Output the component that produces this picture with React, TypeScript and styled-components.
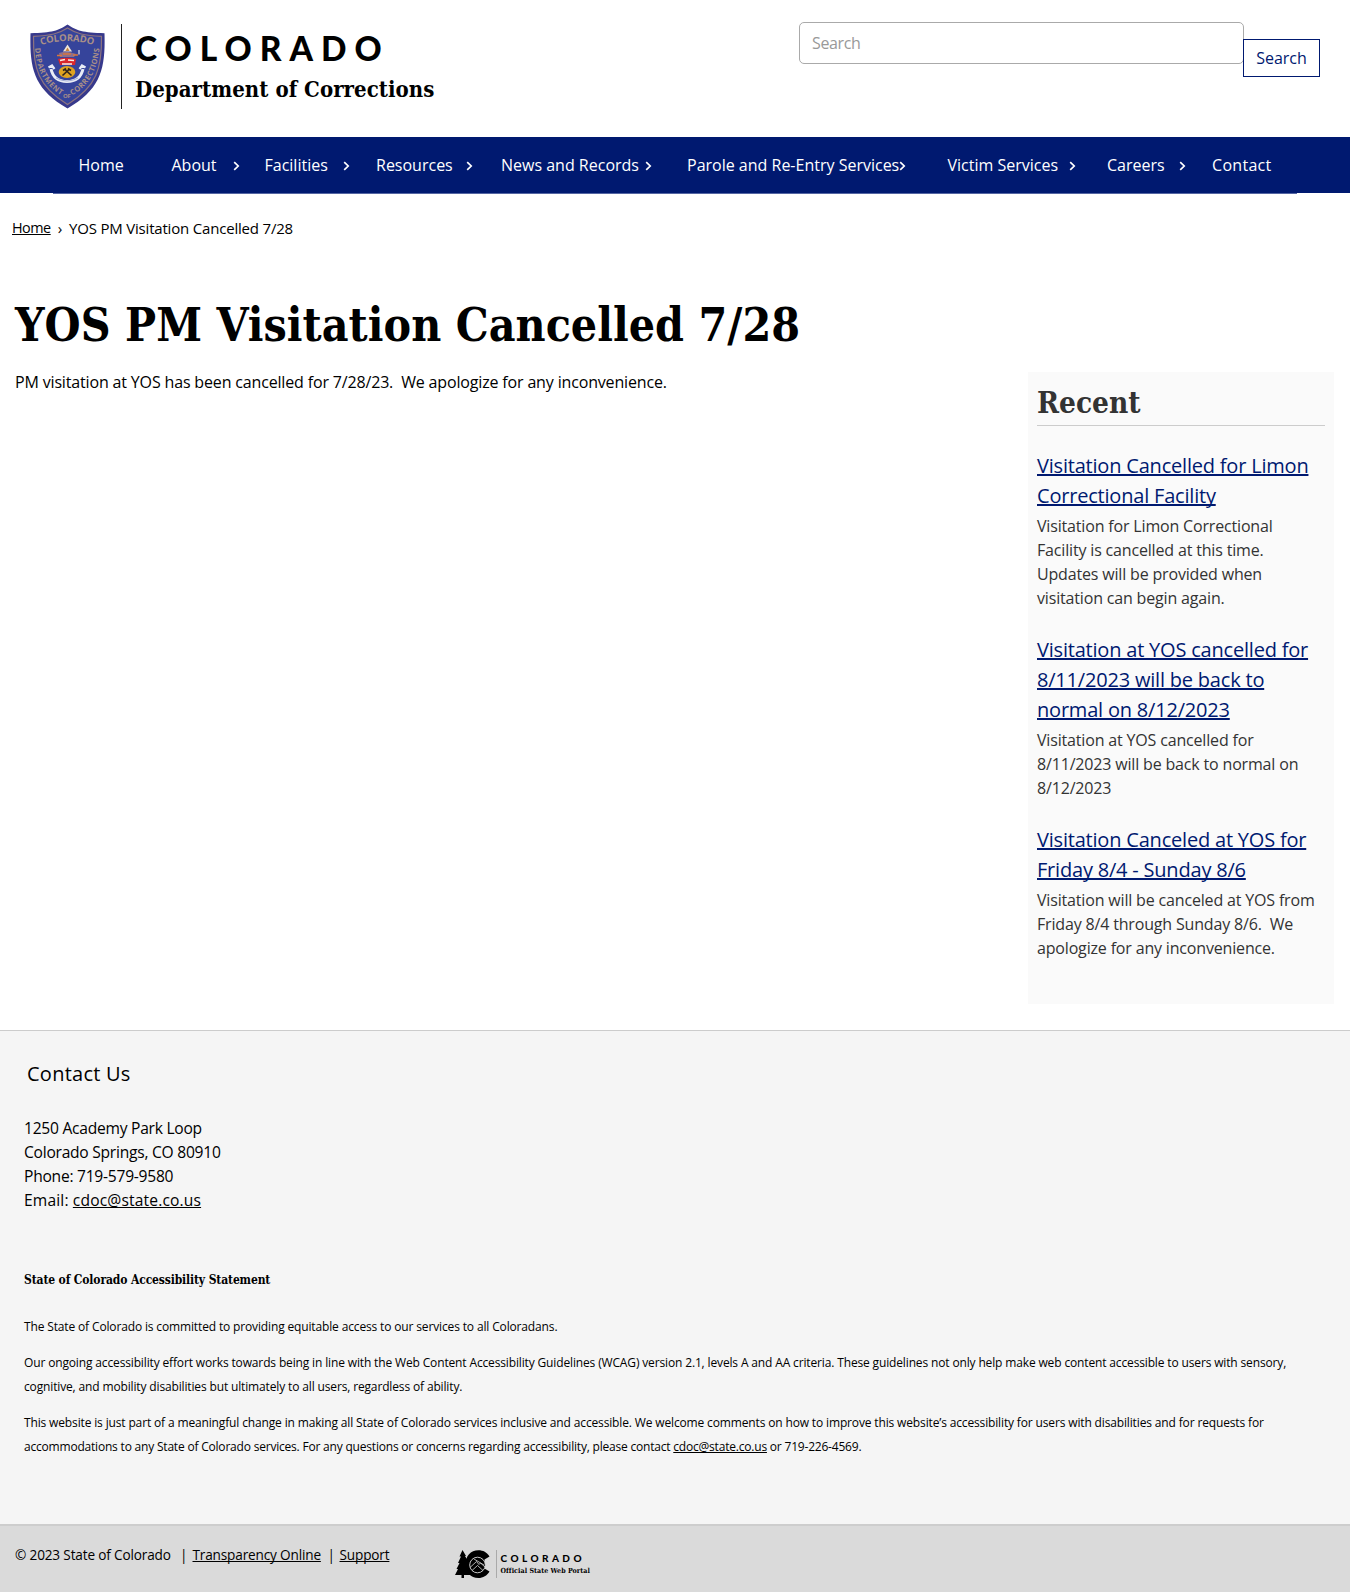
import React from "react";
import styled, { createGlobalStyle } from "styled-components";

const slab = `"DejaVu Serif Condensed", "DejaVu Serif", serif`;
const sans = `"Open Sans", "Noto Sans", sans-serif`;
const display = `Lato, "Open Sans", sans-serif`;
const navy = "#001970";

const GlobalStyle = createGlobalStyle`
  *, *::before, *::after { box-sizing: border-box; }
  body {
    margin: 0;
    background: #fff;
    color: #000;
    font: 16px/24px ${sans};
    letter-spacing: -0.16px;
  }
  h1, h2, h3, p { margin: 0; }
  a { color: inherit; text-decoration-skip-ink: none; }
`;

const Page = styled.div`
  display: flex;
  flex-direction: column;
  width: 1350px;
  min-height: 1592px;
`;

/* ---------- header ---------- */

const Header = styled.header`
  display: flex;
  justify-content: space-between;
  align-items: flex-start;
  height: 137px;
  padding: 22px 30px 0 29px;
`;

const Brand = styled.div`
  display: flex;
  align-items: flex-start;
  padding-top: 2px;
`;

const BrandText = styled.div`
  display: flex;
  flex-direction: column;
  height: 85px;
  margin-left: 16px;
  padding: 4px 0 0 13px;
  border-left: 1px solid #222;
`;

const BrandState = styled.span`
  font: 900 33.5px/41px ${display};
  letter-spacing: 8px;
  white-space: nowrap;
`;

const BrandDept = styled.span`
  margin-top: 6px;
  font: bold 22px/28px ${slab};
  letter-spacing: 0.04px;
  white-space: nowrap;
`;

const SearchForm = styled.form`
  display: flex;
  align-items: flex-start;
`;

const SearchInput = styled.input`
  width: 445px;
  height: 42px;
  padding: 0 12px;
  border: 1px solid #aaa;
  border-radius: 5px;
  background: #fff;
  font: 16px/24px ${sans};
  letter-spacing: -0.35px;
  &::placeholder { color: #999; opacity: 1; }
`;

const SearchButton = styled.button`
  width: 77px;
  height: 38px;
  margin: 17px 0 0 -1px;
  padding: 0;
  border: 1px solid ${navy};
  background: #fff;
  color: ${navy};
  font: 16px/24px ${sans};
`;

/* ---------- navigation ---------- */

const NavBar = styled.nav`
  display: flex;
  justify-content: center;
  height: 57px;
  background: linear-gradient(${navy} 56px, #fff 56px);
`;

const NavList = styled.ul`
  display: flex;
  align-items: center;
  width: 1244px;
  margin: 0;
  padding: 0 0 1px 25.5px;
  border-bottom: 1px solid #5566a3;
  list-style: none;
`;

const NavItem = styled.li<{ $width: number; $gap: number; $track?: number }>`
  display: flex;
  align-items: center;
  flex: none;
  width: ${(p) => p.$width}px;
  padding-right: ${(p) => p.$gap}px;
  color: #fff;
  letter-spacing: ${(p) => p.$track ?? 0}px;
  white-space: nowrap;
`;

const ChevronIcon = styled.svg`
  flex: none;
  width: 7px;
  height: 10px;
  margin: 2px 0 0 auto;
`;

const Chevron = () => (
  <ChevronIcon viewBox="0 0 7 10" fill="none" stroke="#fff" strokeWidth="1.7">
    <path d="M1.2 1.2 5.2 5 1.2 8.8" />
  </ChevronIcon>
);

const menu = [
  { label: "Home", width: 93, gap: 0, sub: false },
  { label: "About", width: 93, gap: 25, sub: true },
  { label: "Facilities", width: 111.5, gap: 26, sub: true },
  { label: "Resources", width: 125, gap: 28, sub: true },
  { label: "News and Records", width: 186, gap: 35.5, sub: true },
  { label: "Parole and Re-Entry Services", width: 260.5, gap: 42, sub: true },
  { label: "Victim Services", width: 159.5, gap: 31.5, sub: true },
  { label: "Careers", width: 105, gap: 26.5, sub: true },
  { label: "Contact", width: 64, gap: 0, sub: false, track: 0.3 },
];

/* ---------- content ---------- */

const Breadcrumb = styled.div`
  display: flex;
  margin: 22px 0 0 12px;
  font-size: 15px;
  letter-spacing: -0.19px;
  white-space: pre;
`;

const HomeLink = styled.a`
  font-size: 14.4px;
  letter-spacing: -0.5px;
`;

const Crumb = styled.span<{ $left?: number }>`
  margin-left: ${(p) => p.$left ?? 0}px;
`;

const Title = styled.h1`
  margin: 58px 0 0 15px;
  font: bold 46px/54px ${slab};
  letter-spacing: 0.03px;
`;

const Columns = styled.main`
  display: flex;
  justify-content: space-between;
  align-items: flex-start;
  height: 678px;
  padding: 18px 16px 0 15px;
`;

const Article = styled.p`
  white-space: pre;
`;

const Sidebar = styled.aside`
  width: 306px;
  height: 632px;
  margin-top: 2px;
  padding: 13px 9px 0;
  background: #fafafa;
  color: #333;
`;

const SidebarTitle = styled.h2`
  height: 41px;
  margin-bottom: 25px;
  border-bottom: 1px solid #ccc;
  font: bold 29.5px/36px ${slab};
  letter-spacing: 0;
`;

const NewsItem = styled.section`
  margin-bottom: 25px;
`;

const NewsTitle = styled.h3`
  margin-bottom: 3px;
  color: ${navy};
  font: 20px/30px ${sans};
  letter-spacing: -0.2px;
`;

const NewsText = styled.p`
  letter-spacing: -0.17px;
`;

const news = [
  {
    title: "Visitation Cancelled for Limon Correctional Facility",
    text: "Visitation for Limon Correctional Facility is cancelled at this time. Updates will be provided when visitation can begin again.",
  },
  {
    title: "Visitation at YOS cancelled for 8/11/2023 will be back to normal on 8/12/2023",
    text: "Visitation at YOS cancelled for 8/11/2023 will be back to normal on 8/12/2023",
  },
  {
    title: "Visitation Canceled at YOS for Friday 8/4 - Sunday 8/6",
    text: "Visitation will be canceled at YOS from Friday 8/4 through Sunday 8/6. \u00a0We apologize for any inconvenience.",
  },
];

/* ---------- footer ---------- */

const Footer = styled.footer`
  height: 494px;
  padding: 28px 24px 0;
  border-top: 1px solid #ccc;
  background: #f5f5f5;
`;

const FooterTitle = styled.h2`
  margin: 0 0 27px 3px;
  font: 20px/30px ${sans};
  letter-spacing: 0.25px;
`;

const Address = styled.address`
  font-style: normal;
  font-size: 15.6px;
  letter-spacing: -0.25px;
`;

const EmailLine = styled.span`
  letter-spacing: 0.15px;
`;

const Statement = styled.section`
  display: flex;
  flex-direction: column;
  gap: 12px;
  margin-top: 56px;
  font-size: 12px;
  letter-spacing: -0.145px;
`;

const StatementTitle = styled.h3`
  margin-bottom: 11px;
  font: bold 12px/24px ${slab};
  letter-spacing: -0.13px;
`;

const Closing = styled.span`
  letter-spacing: -0.2px;
`;

const BottomBar = styled.div`
  display: flex;
  align-items: flex-start;
  height: 68px;
  padding: 19px 15px 0;
  border-top: 2px solid #cdcdcd;
  background: #dadada;
  font-size: 13.6px;
  line-height: 20px;
  letter-spacing: -0.16px;
`;

const BarText = styled.span<{ $width: number }>`
  width: ${(p) => p.$width}px;
  white-space: nowrap;
`;

const Portal = styled.div`
  display: flex;
  align-items: center;
  margin: 5px 0 0 52px;
`;

const PortalText = styled.div`
  display: flex;
  flex-direction: column;
  justify-content: center;
  height: 28px;
  margin-left: 5px;
  padding-left: 4px;
  border-left: 1px solid #aaa;
`;

const PortalState = styled.span`
  font: 900 10px/13px ${display};
  letter-spacing: 3.45px;
`;

const PortalName = styled.span`
  font: bold 7px/12px ${slab};
  letter-spacing: 0.08px;
`;

/* ---------- drawings ---------- */

const Shield = () => (
  <svg width="76" height="85" viewBox="0 0 76 85">
    <defs>
      <path id="arcTop" d="M12 21 Q38 13 64 21" />
      <path id="arcLeft" d="M6 24 C7 45 15 61 32 71" />
      <path id="arcRight" d="M43 71.500 C61 61 69 45 70.500 22" />
    </defs>
    <path
      d="M38.500 .5C30 6.500 23 8.800 1.500 9.200 .5 45 5 65 38.500 84.500 72 65 76.500 45 75.500 9.200 54 8.800 47 6.500 38.500 .5Z"
      fill="#37398c"
    />
    <path
      d="M38.500 4C30 9.500 22 11.800 4.500 12.300 4 44 9 62.500 38.500 80.500 68 62.500 73 44 72.500 12.300 55 11.800 47 9.500 38.500 4Z"
      fill="#36449b"
      stroke="#8d7480"
      strokeWidth="1.200"
    />
    <g fill="#a98f88" fontFamily='"Open Sans", sans-serif' fontWeight="700">
      <text fontSize="9.500">
        <textPath href="#arcTop" textLength="53">COLORADO</textPath>
      </text>
      <text fontSize="7.500">
        <textPath href="#arcLeft" textLength="56">DEPARTMENT</textPath>
      </text>
      <text fontSize="6" x="34" y="74">OF</text>
      <text fontSize="7.500">
        <textPath href="#arcRight" textLength="57">CORRECTIONS</textPath>
      </text>
    </g>
    <path d="M38.500 20.500 43 27.500H34Z" fill="#efe6d8" />
    <path d="M38.500 23.500 40.500 27H36.500Z" fill="#c8803c" />
    <path d="M30 29 36 27.500 42 28.500 47 30 45 33 31 33Z" fill="#8b6f8e" />
    <path d="M28 31.500h5M44 31h5M34 30h8" stroke="#d9763a" strokeWidth="1.500" />
    <path d="M50 26v4.500" stroke="#d8d8ea" strokeWidth="1.300" />
    <path d="M29 35Q38 32.500 47 35L46 41H31Z" fill="#d8272d" />
    <path d="M31 36.500 36 35.500M39 36 45 36.500M33 40H43" stroke="#f4efe8" strokeWidth="1.500" />
    <ellipse cx="38" cy="48" rx="8.300" ry="6" fill="#dfa321" />
    <path d="m33.500 51.500 6.500-6M42.500 51.500 36 45.500M34 46.500l3-2M42 46.500l-3-2" stroke="#30251e" strokeWidth="1.700" />
    <path d="M22 45C24 54 30 57.500 38 57.500S52 54 54 45" fill="none" stroke="#e9ecf6" strokeWidth="3" />
    <path d="M19.500 43.500 23 41.500 25.500 45M56.500 43.500 53 41.500 50.500 45" fill="none" stroke="#e9ecf6" strokeWidth="2.200" />
    <path d="M27 54Q38 60 49 54" fill="none" stroke="#8593c7" strokeWidth=".7" />
  </svg>
);

const PortalMark = () => (
  <svg width="36" height="28" viewBox="0 0 36 28">
    <path d="M7.500 0 11 6H10L13 11H11.800L15 17H13.500L17 25H9V28H6.500V25H0L3 19H1.500L4.500 13H3L6 6.500H4.500Z" fill="#000" />
    <path d="M34.500 6.500C32 2.300 28 .3 23.500 .3 15.500 .3 10.500 6.500 10.500 14.200S15.500 28 23.500 28C28 28 32 25.700 34.500 21.500L29.500 18.500V9.500Z" fill="#000" />
    <circle cx="22.500" cy="15" r="7.800" fill="#000" stroke="#dadada" strokeWidth=".9" />
    <path d="M15 17.500 21.500 11.500 24 14.500 25.500 13 30 17M17 20.500 22.500 15.500 28 20.500M19 9l10 6" fill="none" stroke="#dadada" strokeWidth=".8" />
  </svg>
);

export default function App() {
  return (
    <Page>
      <GlobalStyle />
      <Header>
        <Brand>
          <Shield />
          <BrandText>
            <BrandState>COLORADO</BrandState>
            <BrandDept>Department of Corrections</BrandDept>
          </BrandText>
        </Brand>
        <SearchForm>
          <SearchInput placeholder="Search" />
          <SearchButton type="button">Search</SearchButton>
        </SearchForm>
      </Header>

      <NavBar>
        <NavList>
          {menu.map((item) => (
            <NavItem key={item.label} $width={item.width} $gap={item.gap} $track={item.track}>
              {item.label}
              {item.sub && <Chevron />}
            </NavItem>
          ))}
        </NavList>
      </NavBar>

      <Breadcrumb>
        <HomeLink href="#home">Home</HomeLink>
        <Crumb $left={7}>›</Crumb>
        <Crumb $left={7}>YOS PM Visitation Cancelled 7/28</Crumb>
      </Breadcrumb>

      <Title>YOS PM Visitation Cancelled 7/28</Title>

      <Columns>
        <Article>
          {"PM visitation at YOS has been cancelled for 7/28/23. \u00a0We apologize for any inconvenience."}
        </Article>
        <Sidebar>
          <SidebarTitle>Recent</SidebarTitle>
          {news.map((item) => (
            <NewsItem key={item.title}>
              <NewsTitle>
                <a href="#news">{item.title}</a>
              </NewsTitle>
              <NewsText>{item.text}</NewsText>
            </NewsItem>
          ))}
        </Sidebar>
      </Columns>

      <Footer>
        <FooterTitle>Contact Us</FooterTitle>
        <Address>
          1250 Academy Park Loop
          <br />
          Colorado Springs, CO 80910
          <br />
          Phone: 719-579-9580
          <br />
          <EmailLine>
            Email: <a href="#mail">cdoc@state.co.us</a>
          </EmailLine>
        </Address>
        <Statement>
          <StatementTitle>State of Colorado Accessibility Statement</StatementTitle>
          <p>
            The State of Colorado is committed to providing equitable access to our services to all
            Coloradans.
          </p>
          <p>
            Our ongoing accessibility effort works towards being in line with the Web Content
            Accessibility Guidelines (WCAG) version 2.1, levels A and AA criteria. These guidelines
            not only help make web content accessible to users with sensory, cognitive, and mobility
            disabilities but ultimately to all users, regardless of ability.
          </p>
          <p>
            This website is just part of a meaningful change in making all State of Colorado services
            inclusive and accessible. We welcome comments on how to improve this website’s
            accessibility for users with disabilities and for requests for{" "}
            <Closing>
              accommodations to any State of Colorado services. For any questions or concerns
              regarding accessibility, please contact <a href="#mail">cdoc@state.co.us</a> or
              719-226-4569.
            </Closing>
          </p>
        </Statement>
      </Footer>

      <BottomBar>
        <BarText $width={165}>© 2023 State of Colorado</BarText>
        <BarText $width={12.5}>|</BarText>
        <BarText $width={135}>
          <a href="#transparency">Transparency Online</a>
        </BarText>
        <BarText $width={12}>|</BarText>
        <BarText $width={63}>
          <a href="#support">Support</a>
        </BarText>
        <Portal>
          <PortalMark />
          <PortalText>
            <PortalState>COLORADO</PortalState>
            <PortalName>Official State Web Portal</PortalName>
          </PortalText>
        </Portal>
      </BottomBar>
    </Page>
  );
}
